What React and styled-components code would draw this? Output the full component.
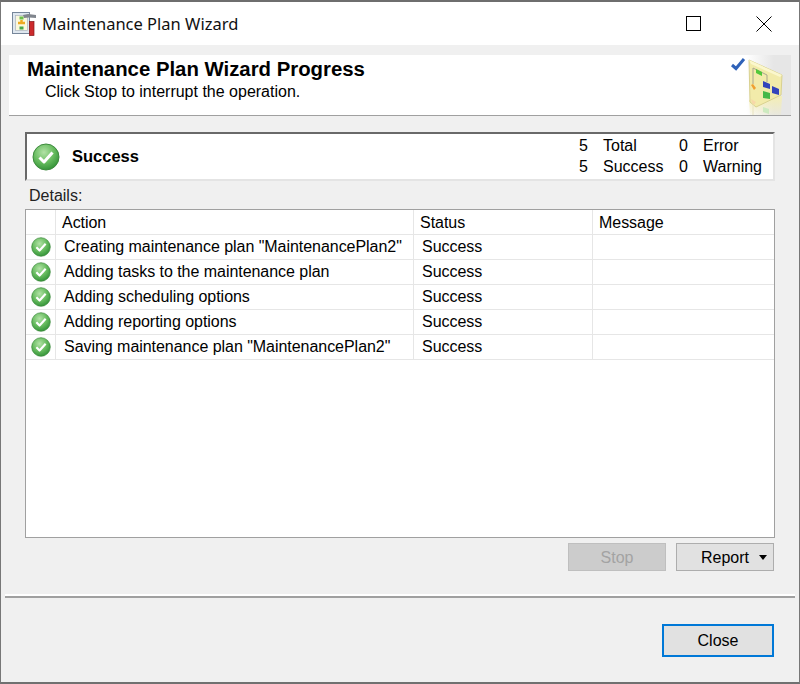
import React from 'react';
import styled, { createGlobalStyle } from 'styled-components';

const GlobalStyle = createGlobalStyle`
  html, body {
    margin: 0;
    padding: 0;
    background: #fff;
  }
  body {
    font-family: "Liberation Sans", Arial, sans-serif;
    font-size: 16px;
    color: #000;
  }
`;

const Frame = styled.div`
  box-sizing: border-box;
  width: 800px;
  height: 684px;
  display: flex;
  flex-direction: column;
  background: #f0f0f0;
  border: 1px solid #707070;
  border-top-width: 2px;
  border-bottom-width: 2px;
  border-top-color: #6e6e6e;
  border-left-color: #777;
  border-right-color: #777;
`;

const TitleBar = styled.div`
  height: 43px;
  flex: none;
  display: flex;
  align-items: center;
  background: #fff;
  padding-left: 10px;
`;

const TitleText = styled.div`
  margin-left: 6px;
  font-family: "Noto Sans", sans-serif;
  font-size: 16.5px;
  color: #111;
`;

const WindowButtons = styled.div`
  margin-left: auto;
  display: flex;
  height: 100%;
`;

const WindowButton = styled.div`
  width: 71px;
  display: flex;
  align-items: center;
  justify-content: center;
`;

const Body = styled.div`
  flex: 1;
  display: flex;
  flex-direction: column;
  padding-top: 10px;
`;

const Header = styled.div`
  height: 60px;
  margin: 0 8px;
  flex: none;
  display: flex;
  justify-content: space-between;
  background: #fff;
  border-bottom: 1px solid #a0a0a0;
`;

const HeaderText = styled.div`
  padding: 3px 0 0 18px;
`;

const HeaderTitle = styled.div`
  font-size: 20.35px;
  font-weight: bold;
  line-height: 23px;
`;

const HeaderSub = styled.div`
  padding-left: 18px;
  line-height: 20px;
  margin-top: 1px;
`;

const HeaderArt = styled.div`
  width: 62px;
  height: 60px;
  background: linear-gradient(90deg, #fff 0%, #fff 28%, #e6e6e6 72%);
`;

const Content = styled.div`
  margin: 16px 24px 0 24px;
  flex: none;
  display: flex;
  flex-direction: column;
`;

const StatusBox = styled.div`
  box-sizing: border-box;
  height: 49px;
  width: 750px;
  display: flex;
  align-items: center;
  background: #fff;
  border-style: solid;
  border-width: 2px;
  border-color: #696969 #e4e4e4 #e4e4e4 #696969;
  padding-left: 5px;
`;

const StatusLabel = styled.div`
  font-weight: bold;
  font-size: 16.5px;
  margin-left: 12px;
`;

const Stats = styled.div`
  margin-left: auto;
  margin-right: 11px;
  display: grid;
  grid-template-columns: 9px 61px 9px 59px;
  column-gap: 15px;
  row-gap: 1px;
  line-height: 20px;
`;

const DetailsLabel = styled.div`
  margin: 6px 0 0 4px;
  line-height: 18px;
  color: #222;
`;

const Table = styled.div`
  box-sizing: border-box;
  height: 329px;
  width: 750px;
  margin-top: 4px;
  background: #fff;
  border: 1px solid #a0a0a0;
`;

const Row = styled.div`
  box-sizing: border-box;
  height: 25px;
  display: grid;
  grid-template-columns: 30px 358px 179px 1fr;
  border-bottom: 1px solid #e6e6e6;
`;

const Cell = styled.div`
  display: flex;
  align-items: center;
  padding-left: 8px;
  border-right: ${p => (p.$last ? 'none' : '1px solid #e6e6e6')};
  white-space: nowrap;
  letter-spacing: -0.04px;
`;

const HeadCell = styled(Cell)`
  padding: 1px 0 0 6px;
`;

const IconCell = styled(Cell)`
  padding: 0 0 1px 5px;
`;

const Actions = styled.div`
  margin-top: 5px;
  width: 749px;
  display: flex;
  justify-content: flex-end;
  gap: 10px;
`;

const Button = styled.div`
  box-sizing: border-box;
  height: 28px;
  width: 98px;
  display: flex;
  align-items: center;
  justify-content: center;
  background: #e1e1e1;
  border: 1px solid #adadad;
`;

const StopButton = styled(Button)`
  padding-top: 1px;
  background: #cccccc;
  color: #a3a3a3;
  border-color: #bfbfbf;
`;

const MenuButton = styled(Button)`
  justify-content: flex-end;
  padding: 1px 6px 0 0;
  gap: 10px;
`;

const CloseButton = styled(Button)`
  height: 33px;
  width: 112px;
  border: 2px solid #0078d7;
`;

const Caret = styled.span`
  width: 0;
  height: 0;
  border-left: 4px solid transparent;
  border-right: 4px solid transparent;
  border-top: 5px solid #000;
`;

const Divider = styled.div`
  margin: 25px 4px 0 4px;
  height: 2px;
  flex: none;
  background: #a0a0a0;
  box-shadow: 0 -2px 0 #fff;
`;

const Footer = styled.div`
  margin: 26px 25px 0 0;
  display: flex;
  justify-content: flex-end;
`;

let checkId = 0;

function CheckIcon({ size }) {
  const id = `check${checkId++}`;
  return (
    <svg width={size} height={size} viewBox="0 0 28 28">
      <defs>
        <radialGradient id={id} cx="0.42" cy="0.32" r="0.72">
          <stop offset="0" stopColor="#b2e2a6" />
          <stop offset="0.55" stopColor="#66bb5e" />
          <stop offset="1" stopColor="#2f8f35" />
        </radialGradient>
      </defs>
      <circle cx="14" cy="14" r="13" fill={`url(#${id})`} stroke="#3d8a3d" strokeWidth="1" />
      <path d="M7.5 14.5 L12 19 L20.5 9.5" fill="none" stroke="#fff" strokeWidth="3" strokeLinejoin="round" />
    </svg>
  );
}

function AppIcon() {
  return (
    <svg width="25" height="25" viewBox="0 0 25 25">
      <rect x="1.5" y="1.5" width="17" height="21" fill="#dfe7ef" stroke="#76869a" />
      <rect x="4.5" y="4.5" width="12" height="15" fill="#fbf8dc" stroke="#aab4bf" strokeWidth="0.7" />
      <rect x="8.5" y="5.5" width="4" height="3" fill="#6cc04a" />
      <path d="M10.5 9 V13 M7 12 H14" stroke="#eeaa22" strokeWidth="2.5" />
      <rect x="8.5" y="15.5" width="4" height="3" fill="#4aa84a" />
      <rect x="18.5" y="10.5" width="4.5" height="14" fill="#cc2a2c" stroke="#84181a" strokeWidth="0.7" />
      <path d="M12 4 L17 3 L26 4 L26 7 L18 6.5 L13 7 Z" fill="#80858d" />
    </svg>
  );
}

function PlanArt() {
  return (
    <svg width="62" height="60" viewBox="0 0 62 60">
      <defs>
        <linearGradient id="planFade" x1="0" y1="0" x2="0" y2="1">
          <stop offset="0" stopColor="#f4eeb4" />
          <stop offset="1" stopColor="#f4eeb4" stopOpacity="0.15" />
        </linearGradient>
      </defs>
      <path d="M20 45 L53 41 L52 60 L21 60 Z" fill="url(#planFade)" />
      <path d="M3 10 L7 13.5 L15 4" fill="none" stroke="#2f62b8" strokeWidth="3" />
      <path d="M20 5 L53 20 L52 40 L27 52 L21 47 Z" fill="#f2ebaa" stroke="#d9d190" />
      <path d="M20 5 L53 20 L51 22 L22 9 Z" fill="#fbf7cc" />
      <path d="M24 29 L24 13 L38 20 L38 27" fill="none" stroke="#a9a68e" />
      <path d="M27 14 L33 17 L33 21 L27 18 Z" fill="#52c83a" />
      <path d="M22 30 L24 29 L27 33 L25 35 Z" fill="#f0a030" />
      <path d="M34 26 L41 29 L41 34 L34 32 Z" fill="#3344bb" />
      <path d="M43 31 L50 34 L50 40 L43 38 Z" fill="#3344bb" />
      <path d="M34 36 L41 38 L41 44 L34 43 Z" fill="#46b848" />
      <path d="M24 50 L24 60" stroke="#e8e2c0" />
      <path d="M22 44 L27 47 L25 50 L23 48 Z" fill="#f7d8a8" />
      <path d="M34 52 L40 54 L40 59 L34 57 Z" fill="#cdeac0" />
    </svg>
  );
}

const rows = [
  'Creating maintenance plan "MaintenancePlan2"',
  'Adding tasks to the maintenance plan',
  'Adding scheduling options',
  'Adding reporting options',
  'Saving maintenance plan "MaintenancePlan2"',
];

export default function App() {
  return (
    <Frame>
      <GlobalStyle />
      <TitleBar>
        <AppIcon />
        <TitleText>Maintenance Plan Wizard</TitleText>
        <WindowButtons>
          <WindowButton>
            <svg width="16" height="16" viewBox="0 0 16 16">
              <rect x="1.5" y="0.5" width="14" height="14" fill="none" stroke="#000" />
            </svg>
          </WindowButton>
          <WindowButton>
            <svg width="16" height="16" viewBox="0 0 16 16">
              <path d="M0.5 0.5 L15.5 15.5 M15.5 0.5 L0.5 15.5" stroke="#000" fill="none" />
            </svg>
          </WindowButton>
        </WindowButtons>
      </TitleBar>
      <Body>
        <Header>
          <HeaderText>
            <HeaderTitle>Maintenance Plan Wizard Progress</HeaderTitle>
            <HeaderSub>Click Stop to interrupt the operation.</HeaderSub>
          </HeaderText>
          <HeaderArt>
            <PlanArt />
          </HeaderArt>
        </Header>
        <Content>
          <StatusBox>
            <CheckIcon size={28} />
            <StatusLabel>Success</StatusLabel>
            <Stats>
              <span>5</span><span>Total</span><span>0</span><span>Error</span>
              <span>5</span><span>Success</span><span>0</span><span>Warning</span>
            </Stats>
          </StatusBox>
          <DetailsLabel>Details:</DetailsLabel>
          <Table>
            <Row>
              <Cell />
              <HeadCell>Action</HeadCell>
              <HeadCell>Status</HeadCell>
              <HeadCell $last>Message</HeadCell>
            </Row>
            {rows.map(text => (
              <Row key={text}>
                <IconCell><CheckIcon size={20} /></IconCell>
                <Cell>{text}</Cell>
                <Cell>Success</Cell>
                <Cell $last />
              </Row>
            ))}
          </Table>
          <Actions>
            <StopButton>Stop</StopButton>
            <MenuButton>Report<Caret /></MenuButton>
          </Actions>
        </Content>
        <Divider />
        <Footer>
          <CloseButton>Close</CloseButton>
        </Footer>
      </Body>
    </Frame>
  );
}
